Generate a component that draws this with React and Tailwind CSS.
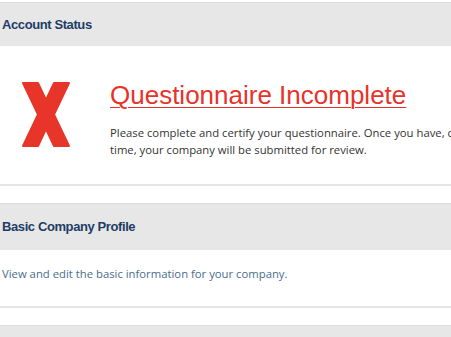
export default function App() {
  const sans = { fontFamily: '"Liberation Sans", Arial, sans-serif' };
  const body = { fontFamily: '"Open Sans", "Noto Sans", sans-serif' };

  return (
    <div className="w-[451px] h-[337px] overflow-hidden bg-white">
      <div className="w-[600px] pt-[2px]">
        <section className="border-t border-[#dcdcdc] border-b-2 border-b-[#e6e6e6]">
          <div
            className="h-[43px] flex items-center px-[2px] bg-[#e7e7e7] text-[13px] tracking-[-0.4px] font-bold text-[#1d3d66]"
            style={sans}
          >
            Account Status
          </div>
          <div className="flex items-start pl-[22px] pt-[34px] pb-[26px]">
            <svg width="48" height="65" viewBox="0 0 48 65" className="shrink-0 mt-[2px]">
              <polygon
                points="1,1 16,1 24,18 32,1 47,1 32,32.5 47,64 32,64 24,47 16,64 1,64 16,32.5"
                fill="#e8352a"
                stroke="#e8352a"
                strokeWidth="2"
                strokeLinejoin="round"
              />
            </svg>
            <div className="ml-[40px]">
              <a
                href="#"
                className="block text-[26px] leading-[30px] text-[#e8322a] underline underline-offset-[3px] decoration-[1px]"
                style={sans}
              >
                Questionnaire Incomplete
              </a>
              <p
                className="mt-[14px] text-[11.3px] leading-[17px] text-[#333] whitespace-nowrap"
                style={body}
              >
                Please complete and certify your questionnaire. Once you have, confirm your answers at that
                <br />
                time, your company will be submitted for review.
              </p>
            </div>
          </div>
        </section>

        <section className="mt-[17px] border-t border-[#dcdcdc] border-b-2 border-b-[#e6e6e6]">
          <div
            className="h-[46px] flex items-center px-[2px] bg-[#e7e7e7] text-[13px] tracking-[-0.4px] font-bold text-[#1d3d66]"
            style={sans}
          >
            Basic Company Profile
          </div>
          <p className="px-[2px] pt-[11px] pb-[19px] text-[11.3px] leading-[26px] text-[#4a6d8c]" style={body}>
            View and edit the basic information for your company.
          </p>
        </section>

        <section className="mt-[17px] border-t border-[#dcdcdc]">
          <div className="h-[46px] bg-[#e7e7e7]" />
        </section>
      </div>
    </div>
  );
}
